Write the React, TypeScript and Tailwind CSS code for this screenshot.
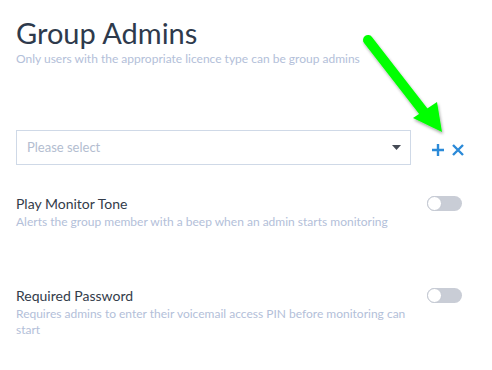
function Toggle() {
  return (
    <div className="relative w-[35px] h-[15px] rounded-full bg-[#c9cdd6] shrink-0">
      <div className="absolute left-0 top-0 w-[15px] h-[15px] rounded-full bg-white border border-[#c2c7d1]" />
    </div>
  );
}

function Setting({ title, desc }: { title: string; desc: string }) {
  return (
    <div className="flex items-start justify-between">
      <div className="w-[395px]">
        <div className="text-[14px] leading-[18px] text-[#333c4a]">{title}</div>
        <div className="text-[12px] leading-[16px] text-[#b3c0d9] mt-[1px]">{desc}</div>
      </div>
      <div className="mr-[14px] mt-[1px]">
        <Toggle />
      </div>
    </div>
  );
}

function Arrow() {
  return (
    <svg className="absolute left-[355px] top-[30px]" width="100" height="110" viewBox="0 0 100 110">
      <defs>
        <filter id="sh" x="-20%" y="-20%" width="140%" height="140%">
          <feDropShadow dx="1" dy="2" stdDeviation="1.5" floodColor="#000" floodOpacity="0.35" />
        </filter>
      </defs>
      <g filter="url(#sh)">
        <line x1="13" y1="10" x2="72" y2="86" stroke="#00ff00" strokeWidth="10" strokeLinecap="round" />
        <polygon points="87,102 58,88 82,72" fill="#00ff00" />
      </g>
    </svg>
  );
}

export default function App() {
  return (
    <div
      className="relative w-[492px] h-[370px] bg-white px-4 pt-[15px]"
      style={{ fontFamily: 'Lato, "Open Sans", sans-serif' }}
    >
      <h1 className="text-[29px] leading-[35px] text-[#2e3a4c]">Group Admins</h1>
      <p className="text-[12px] leading-[16px] text-[#b3c0d9] mt-[1px]">
        Only users with the appropriate licence type can be group admins
      </p>

      <div className="flex items-center mt-[63px]">
        <div className="flex items-center justify-between w-[395px] h-[35px] border border-[#cfd9e7] pl-[10px] pr-[9px]">
          <span className="text-[13px] text-[#b3bdd0]">Please select</span>
          <svg width="9" height="6" viewBox="0 0 9 6">
            <polygon points="0,0 9,0 4.5,5" fill="#444a54" />
          </svg>
        </div>
        <div className="flex items-center gap-[8px] ml-[21px] mt-[4px]">
          <svg width="12" height="12" viewBox="0 0 12 12">
            <path d="M6 0v12M0 6h12" stroke="#2b8ad8" strokeWidth="2.4" />
          </svg>
          <svg width="12" height="12" viewBox="0 0 12 12">
            <path d="M1 1l10 10M11 1L1 11" stroke="#2b8ad8" strokeWidth="2.4" />
          </svg>
        </div>
      </div>

      <div className="mt-[30px]">
        <Setting
          title="Play Monitor Tone"
          desc="Alerts the group member with a beep when an admin starts monitoring"
        />
      </div>
      <div className="mt-[57px]">
        <Setting
          title="Required Password"
          desc="Requires admins to enter their voicemail access PIN before monitoring can start"
        />
      </div>

      <Arrow />
    </div>
  );
}
